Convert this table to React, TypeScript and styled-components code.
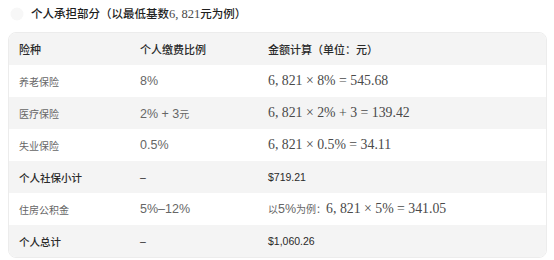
import React from "react";
import styled, { createGlobalStyle } from "styled-components";

const GlobalStyle = createGlobalStyle`
  html, body {
    margin:0;
    padding:0;
    background:#ffffff;
  }
  body {
    font-family:"Liberation Sans", "Noto Sans CJK SC", sans-serif;
  }
`;

const Page = styled.div`
  padding:0 7px 0 8px;
  width:554px;
  box-sizing:border-box;
`;

const Heading = styled.div`
  height:27px;
  display:flex;
  align-items:center;
  gap:7px;
  padding-left:2px;
  margin-bottom:5px;
  font-size:11.5px;
  font-weight:500;
  color:#1f1f1f;
`;

const Math = styled.span<{ size?: number }>`
  font-family:"Liberation Serif", "Noto Sans CJK SC", serif;
  font-weight:400;
  font-size:${({ size }) => size || 13.8}px;
  color:#4a4a4a;
`;

const Num = styled.span`
  font-size:12.5px;
`;

const Table = styled.div`
  border:1px solid #ececec;
  border-radius:8px;
  overflow:hidden;
`;

const Row = styled.div<{ head?: boolean; total?: boolean }>`
  display:grid;
  grid-template-columns:121px 128px 1fr;
  height:32px;
  align-items:center;
  background:#ffffff;
  color:${({ head, total }) => (head || total ? "#2a2a2a" : "#666666")};
  font-size:${({ head, total }) => (head ? 11 : total ? 10.5 : 10)}px;
  font-weight:${({ head, total }) => (head || total ? 500 : 400)};

  &:nth-child(odd) {
    background:#f4f4f4;
  }
`;

const Cell = styled.div`
  padding-left:10px;
  white-space:nowrap;
`;

const Dot = () => (
  <svg width="14" height="14" viewBox="0 0 14 14">
    <circle cx="7" cy="7" r="6.5" fill="#f7f7f7" />
  </svg>
);

const rows: { name: string; rate: React.ReactNode; calc: React.ReactNode; total?: boolean }[] = [
  { name: "养老保险", rate: <Num>8%</Num>, calc: <Math>6, 821 × 8% = 545.68</Math> },
  {
    name: "医疗保险",
    rate: (
      <>
        <Num>2% + 3</Num>元
      </>
    ),
    calc: <Math>6, 821 × 2% + 3 = 139.42</Math>,
  },
  { name: "失业保险", rate: <Num>0.5%</Num>, calc: <Math>6, 821 × 0.5% = 34.11</Math> },
  { name: "个人社保小计", rate: "–", calc: "$719.21", total: true },
  {
    name: "住房公积金",
    rate: <Num>5%–12%</Num>,
    calc: (
      <>
        以<Num>5%</Num>为例：<Math>6, 821 × 5% = 341.05</Math>
      </>
    ),
  },
  { name: "个人总计", rate: "–", calc: "$1,060.26", total: true },
];

export default function App() {
  return (
    <Page>
      <GlobalStyle />
      <Heading>
        <Dot />
        <span>
          个人承担部分（以最低基数<Math size={12.5}>6, 821</Math>元为例）
        </span>
      </Heading>
      <Table>
        <Row head>
          <Cell>险种</Cell>
          <Cell>个人缴费比例</Cell>
          <Cell>金额计算（单位：元）</Cell>
        </Row>
        {rows.map((r) => (
          <Row key={r.name} total={r.total}>
            <Cell>{r.name}</Cell>
            <Cell>{r.rate}</Cell>
            <Cell>{r.calc}</Cell>
          </Row>
        ))}
      </Table>
    </Page>
  );
}
